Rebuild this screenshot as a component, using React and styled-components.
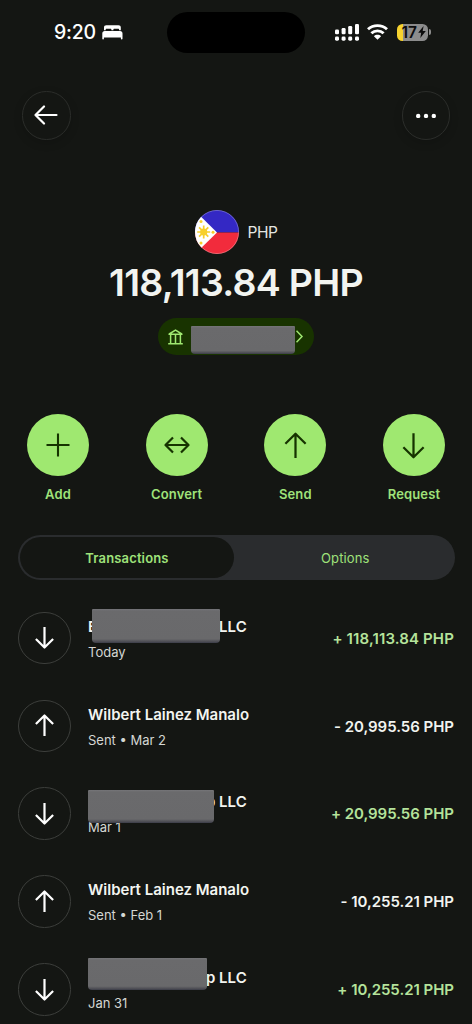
import React from "react";
import styled, { createGlobalStyle } from "styled-components";

const GlobalStyle = createGlobalStyle`
  * { box-sizing: border-box; }
  html, body { margin: 0; padding: 0; background: #141613; }
  body { font-family: Inter, "Liberation Sans", sans-serif; overflow: hidden; }
  button { font: inherit; border: 0; padding: 0; margin: 0; background: none; color: inherit; }
  svg { display: block; flex: none; }
`;

const Screen = styled.main`
  width: 472px;
  height: 1024px;
  overflow: hidden;
  background: #141613;
  color: #f2f4f0;
  display: flex;
  flex-direction: column;
`;

const StatusBar = styled.header`
  height: 64px;
  flex: none;
  display: grid;
  grid-template-columns: 167px 138px 167px;
`;

const StatusLeft = styled.div`
  height: 64px;
  padding-left: 54px;
  display: flex;
  align-items: center;
  gap: 5px;
`;

const Clock = styled.span`
  width: 43px;
  font-size: 19.5px;
  font-weight: 550;
  letter-spacing: -0.2px;
  line-height: 24px;
  white-space: nowrap;
  color: #fff;
`;

const Island = styled.div`
  height: 41px;
  margin-top: 12px;
  border-radius: 21px;
  background: #000;
`;

const StatusRight = styled.div`
  height: 64px;
  padding-left: 30px;
  display: flex;
  align-items: center;
`;

const Battery = styled.div`
  width: 31px;
  height: 17px;
  margin-left: 9px;
  border-radius: 5.5px;
  background: linear-gradient(90deg, #f7d32f 0 6px, #8c8c8c 6px);
  display: flex;
  align-items: center;
  gap: 1px;
  padding-left: 4.5px;
  color: #0c0c0c;
  font-size: 15.5px;
  font-weight: 600;
  letter-spacing: 0;
  line-height: 17px;
`;

const BatteryTip = styled.i`
  width: 2px;
  height: 6px;
  margin-left: 1px;
  border-radius: 0 2px 2px 0;
  background: #8c8c8c;
`;

const NavBar = styled.nav`
  height: 75px;
  flex: none;
  padding: 27px 22px 0;
  display: flex;
  justify-content: space-between;
`;

const RoundButton = styled.button`
  width: 48.5px;
  height: 48.5px;
  border-radius: 50%;
  border: 1px solid #2b2d2a;
  box-shadow: 0 3px 10px rgba(0, 0, 0, 0.16);
  display: flex;
  align-items: center;
  justify-content: center;
`;

const Summary = styled.section`
  height: 275px;
  flex: none;
  padding-top: 71px;
  display: flex;
  flex-direction: column;
  align-items: center;
`;

const Currency = styled.div`
  display: flex;
  align-items: center;
  gap: 9px;
  height: 44px;
  font-size: 15.5px;
  line-height: 20px;
  letter-spacing: -0.5px;
  color: #e4e6e2;
`;

const CurrencyCode = styled.span`
  padding-top: 2px;
`;

const Balance = styled.h1`
  margin: 7px 0 0;
  height: 44px;
  font-size: 37.5px;
  line-height: 44px;
  font-weight: 600;
  letter-spacing: -0.72px;
  white-space: nowrap;
`;

const AccountPill = styled.button`
  width: 156px;
  height: 37px;
  margin-top: 13px;
  padding: 0 10px 0 10px;
  border-radius: 19px;
  background: #183300;
  display: flex;
  align-items: center;
`;

const Mask = styled.span`
  display: block;
  width: ${(p) => p.$w}px;
  height: ${(p) => p.$h}px;
  border-radius: 1px 1px 4px 4px;
  background: linear-gradient(180deg, #757579 0, #6a6a6c 2px, #69696b 88%, #4d4d54 96%, #3b3c49 100%);
`;

const PillMask = styled(Mask)`
  margin: 6px 0 0 8px;
`;

const Actions = styled.section`
  height: 121px;
  flex: none;
  padding: 0 27px;
  display: flex;
  justify-content: space-between;
`;

const Action = styled.div`
  width: 62px;
  display: flex;
  flex-direction: column;
  align-items: center;
`;

const ActionDisc = styled.button`
  width: 62px;
  height: 62px;
  border-radius: 50%;
  background: #9fe870;
  display: flex;
  align-items: center;
  justify-content: center;
`;

const ActionLabel = styled.span`
  margin-top: 10px;
  font-size: 13px;
  line-height: 16px;
  font-weight: 600;
  letter-spacing: 0.15px;
  color: #9fe27a;
`;

const Tabs = styled.div`
  width: 436.5px;
  height: 45px;
  flex: none;
  margin-left: 18px;
  padding: 2px;
  border-radius: 23px;
  background: #2a2c2e;
  display: grid;
  grid-template-columns: 214px 1fr;
`;

const Tab = styled.button`
  height: 41px;
  border-radius: 21px;
  background: ${(p) => (p.$active ? "#141613" : "transparent")};
  color: #9fe27a;
  font-size: 13px;
  font-weight: ${(p) => (p.$active ? 600 : 400)};
  letter-spacing: ${(p) => (p.$active ? 0.15 : 0.1)}px;
  padding-left: ${(p) => (p.$active ? 0 : 4)}px;
`;

const List = styled.section`
  padding: 14px 18px 0;
`;

const Row = styled.article`
  height: 87.9px;
  display: flex;
  align-items: center;
`;

const RowIcon = styled.div`
  width: 52.5px;
  height: 52.5px;
  border-radius: 50%;
  border: 1px solid #3c3e3b;
  display: flex;
  align-items: center;
  justify-content: center;
  flex: none;
`;

const Details = styled.div`
  position: relative;
  margin-left: 17.5px;
  padding-top: 1.5px;
  flex: none;
`;

const Name = styled.div`
  width: ${(p) => (p.$masked ? "158.7px" : "auto")};
  display: flex;
  justify-content: space-between;
  font-size: 15px;
  line-height: 20px;
  font-weight: 600;
  letter-spacing: 0;
  white-space: nowrap;
`;

const Sub = styled.div`
  margin-top: 6px;
  font-size: 13px;
  line-height: 18px;
  color: #d5d7d3;
  letter-spacing: 0;
  white-space: nowrap;
`;

const NameMask = styled(Mask)`
  position: absolute;
  left: ${(p) => p.$x}px;
  top: ${(p) => p.$y}px;
`;

const Amount = styled.div`
  margin-left: auto;
  padding-top: 1.5px;
  font-size: 15px;
  line-height: 20px;
  font-weight: 600;
  letter-spacing: ${(p) => p.$tracking}px;
  white-space: nowrap;
  color: ${(p) => (p.$credit ? "#b5e39b" : "#f2f4f0")};
`;

const Arrow = ({ dir, size = 24, color = "#fff", width = 2 }) => (
  <svg width={size} height={size} viewBox="0 0 24 24" fill="none" stroke={color} strokeWidth={width}>
    <g transform={dir === "up" ? "rotate(180 12 12)" : undefined}>
      <path d="M12 1V22.4M3 13.6L12 22.4L21 13.6" strokeLinejoin="round" />
    </g>
  </svg>
);

const Bed = () => (
  <svg width="21" height="15" viewBox="0 0 21 15" fill="#fff">
    <path d="M2 5.200V2.600C2 1 2.800.3 4.400.3h12C18 .3 18.800 1 18.800 2.600V5.200h-1.700V4.800c0-.7-.3-1-1-1h-3.700c-.7 0-1 .3-1 1v.4h-2v-.4c0-.7-.3-1-1-1H4.700c-.7 0-1 .3-1 1v.4z" />
    <path d="M2.800 6h15.200c1.600 0 2.500.9 2.500 2.500v5.300c0 .5-.3.800-.8.800s-.8-.3-.8-.8v-1.200h-17v1.200c0 .5-.3.800-.8.800s-.8-.3-.8-.8V8.500c0-1.600.9-2.500 2.500-2.500z" />
  </svg>
);

const Signal = () => (
  <svg width="25" height="17" viewBox="0 0 25 17" fill="#fff">
    <rect x="0" y="5.500" width="4" height="4.700" rx="1.300" />
    <rect x="6.600" y="4" width="4" height="6.200" rx="1.300" />
    <rect x="13.200" y="2" width="4" height="8.200" rx="1.300" />
    <rect x="20" y="0" width="4" height="10.200" rx="1.300" />
    <rect x="0" y="12.500" width="4" height="4.200" rx="1.400" />
    <rect x="6.600" y="12.500" width="4" height="4.200" rx="1.400" />
    <rect x="13.200" y="12.500" width="4" height="4.200" rx="1.400" />
    <rect x="20" y="12.500" width="4" height="4.200" rx="1.400" />
  </svg>
);

const Wifi = styled.svg`
  margin-left: 7px;
`;

const Flag = () => (
  <svg width="44" height="44" viewBox="0 0 44 44">
    <defs>
      <clipPath id="disc"><circle cx="22" cy="22" r="22" /></clipPath>
    </defs>
    <g clipPath="url(#disc)">
      <rect width="44" height="22.500" fill="#3428c4" />
      <rect y="22.500" width="44" height="22" fill="#f22b3c" />
      <path d="M0 .8L22 22.500L0 44z" fill="#fff" />
      <circle cx="8.700" cy="22" r="3.600" fill="#f7cf2b" />
      <g stroke="#f7cf2b" strokeWidth="1.700">
        <path d="M8.700 15.500v13M2.200 22h13M4.100 17.400l9.200 9.200M13.300 17.400l-9.200 9.200" />
      </g>
      <g fill="#f7cf2b">
        <circle cx="6" cy="11.500" r="1.500" />
        <circle cx="6" cy="33" r="1.500" />
        <circle cx="18" cy="22.200" r="1.500" />
      </g>
    </g>
    <circle cx="22" cy="22" r="21.600" fill="none" stroke="#fff" strokeOpacity=".35" strokeWidth=".8" />
  </svg>
);

const Bank = () => (
  <svg width="15" height="16" viewBox="0 0 15 16" fill="none" stroke="#9fe870" strokeWidth="1.500">
    <path d="M.2 14.800h14.600M.5 5.300h14M1.200 5L7.500 1.200L13.800 5M2.600 5.500v9M7.500 5.500v9M12.400 5.500v9" />
  </svg>
);

const Chevron = styled.svg`
  margin-left: 1px;
`;

const actionIcons = {
  Add: (
    <svg width="24" height="24" viewBox="0 0 24 24" fill="none" stroke="#163300" strokeWidth="2.100">
      <path d="M12 .5v23M.5 12h23" />
    </svg>
  ),
  Convert: (
    <svg width="26" height="18" viewBox="0 0 26 18" fill="none" stroke="#163300" strokeWidth="2.200">
      <path d="M1.500 9h23M9 1.500L1.500 9L9 16.500M17 1.500L24.500 9L17 16.500" strokeLinejoin="round" />
    </svg>
  ),
  Send: <Arrow dir="up" size={27} color="#163300" width={2} />,
  Request: <Arrow dir="down" size={27} color="#163300" width={2} />,
};

const transactions = [
  { first: "E", last: "LLC", sub: "Today", amount: "+ 118,113.84 PHP", credit: true, tracking: 0.13, mask: [4, -6, 128, 34] },
  { first: "Wilbert Lainez Manalo", sub: "Sent • Mar 2", amount: "- 20,995.56 PHP" },
  { first: "", last: "p LLC", sub: "Mar 1", amount: "+ 20,995.56 PHP", credit: true, mask: [-0.5, -1, 126, 33] },
  { first: "Wilbert Lainez Manalo", sub: "Sent • Feb 1", amount: "- 10,255.21 PHP" },
  { first: "", last: "p LLC", sub: "Jan 31", amount: "+ 10,255.21 PHP", credit: true, mask: [-0.5, -8.5, 119.5, 32] },
];

export default function App() {
  return (
    <Screen>
      <GlobalStyle />
      <StatusBar>
        <StatusLeft>
          <Clock>9:20</Clock>
          <Bed />
        </StatusLeft>
        <Island />
        <StatusRight>
          <Signal />
          <Wifi width="21" height="16" viewBox="0 0 21 16" fill="none" stroke="#fff" strokeWidth="2.900">
            <path d="M1 5.300C6.300.4 14.700.4 20 5.300M4.400 9.300C7.800 6 13.200 6 16.600 9.300" />
            <path d="M10.500 15.800L6.900 12.200C8.900 10.300 12.100 10.300 14.100 12.200z" fill="#fff" stroke="none" />
          </Wifi>
          <Battery>
            17
            <svg width="8" height="12" viewBox="0 0 8 12" fill="#0c0c0c">
              <path d="M5.600 0L.2 6.700h3L2.300 12L7.800 5.100H4.700z" />
            </svg>
          </Battery>
          <BatteryTip />
        </StatusRight>
      </StatusBar>

      <NavBar>
        <RoundButton aria-label="Back">
          <svg width="24" height="20" viewBox="0 0 24 20" fill="none" stroke="#fff" strokeWidth="2.200" strokeLinecap="round" strokeLinejoin="round">
            <path d="M1.500 10h21M10 1.500L1.500 10L10 18.500" />
          </svg>
        </RoundButton>
        <RoundButton aria-label="More">
          <svg width="20" height="6" viewBox="0 0 20 6" fill="#fff">
            <circle cx="2.200" cy="4" r="2.200" />
            <circle cx="10" cy="4" r="2.200" />
            <circle cx="17.800" cy="4" r="2.200" />
          </svg>
        </RoundButton>
      </NavBar>

      <Summary>
        <Currency>
          <Flag />
          <CurrencyCode>PHP</CurrencyCode>
        </Currency>
        <Balance>118,113.84 PHP</Balance>
        <AccountPill aria-label="Account details">
          <Bank />
          <PillMask $w={104} $h={28} />
          <Chevron width="8" height="13" viewBox="0 0 8 13" fill="none" stroke="#9fe870" strokeWidth="1.500">
            <path d="M.5 .8L6 6.500L.5 12.200" />
          </Chevron>
        </AccountPill>
      </Summary>

      <Actions>
        {Object.entries(actionIcons).map(([label, icon]) => (
          <Action key={label}>
            <ActionDisc aria-label={label}>{icon}</ActionDisc>
            <ActionLabel>{label}</ActionLabel>
          </Action>
        ))}
      </Actions>

      <Tabs>
        <Tab $active>Transactions</Tab>
        <Tab>Options</Tab>
      </Tabs>

      <List>
        {transactions.map((t) => (
          <Row key={t.sub}>
            <RowIcon>
              <Arrow dir={t.credit ? "down" : "up"} size={23} width={2.3} />
            </RowIcon>
            <Details>
              <Name $masked={!!t.mask}>
                <span>{t.first}</span>
                {t.last && <span>{t.last}</span>}
              </Name>
              <Sub>{t.sub}</Sub>
              {t.mask && <NameMask $x={t.mask[0]} $y={t.mask[1]} $w={t.mask[2]} $h={t.mask[3]} />}
            </Details>
            <Amount $credit={t.credit} $tracking={t.tracking ?? -0.03}>{t.amount}</Amount>
          </Row>
        ))}
      </List>
    </Screen>
  );
}
